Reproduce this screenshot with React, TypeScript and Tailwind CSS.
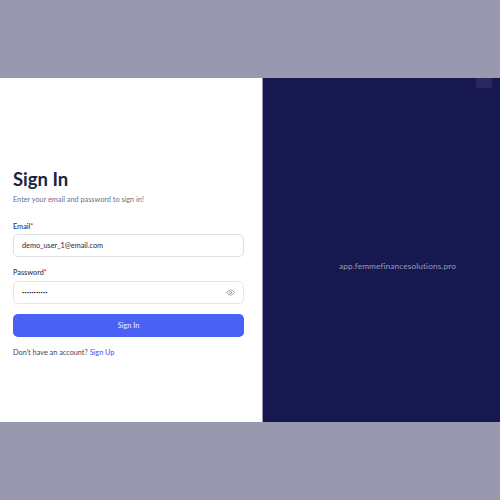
import { Eye } from "lucide-react";

export default function App() {
  return (
    <div className="h-[500px] w-[500px] bg-[#9898ae] flex flex-col justify-center font-['Lato',sans-serif] overflow-hidden">
      <div className="h-[344px] flex bg-white">
        <div className="w-[263px] shrink-0 border-r border-[#9898ae] pl-[13px] pr-[18px] pt-[90px]">
          <h1 className="text-[18.5px] leading-[22px] font-bold text-[#1b2540]">Sign In</h1>
          <p className="mt-[4px] text-[7.3px] leading-[12px] text-[#68708a]">Enter your email and password to sign in!</p>

          <form className="mt-[15px]">
            <label className="block text-[7.3px] leading-[12px] font-medium text-[#2a3350]">
              Email<span className="text-[#e5283d]">*</span>
            </label>
            <input
              type="text"
              readOnly
              value="demo_user_1@email.com"
              className="block mt-[1px] w-full h-[23px] px-[8px] border border-[#dcdfe8] rounded-[5px] text-[7.3px] text-[#1f2940] outline-none"
            />

            <label className="block mt-[10px] text-[7.3px] leading-[12px] font-medium text-[#2a3350]">
              Password<span className="text-[#e5283d]">*</span>
            </label>
            <div className="mt-[2px] relative">
              <input
                type="password"
                readOnly
                value="password123"
                className="block w-full h-[23px] px-[8px] border border-[#e4e6ed] rounded-[5px] text-[4px] text-[#1f2940] outline-none"
              />
              <Eye className="absolute right-[9px] top-[7px] w-[9px] h-[9px] text-[#868c9e]" />
            </div>

            <button
              type="button"
              className="block mt-[10px] w-full h-[23px] pt-[1px] rounded-[5px] bg-[#4a61f5] text-[#e6e9fe] text-[7.3px] font-medium"
            >
              Sign In
            </button>
          </form>

          <p className="mt-[10px] text-[7.3px] leading-[12px] text-[#3d4560]">
            Don't have an account? <span className="font-medium text-[#4a61f5]">Sign Up</span>
          </p>
        </div>

        <div className="relative flex-1 bg-[#17184f] flex items-center justify-center pt-[33px] pl-[32px]">
          <div className="absolute top-0 right-[8px] w-[16px] h-[10px] bg-[#29295d]" />
          <span className="text-[8.3px] tracking-[0.1px] text-[#9a9cba]">app.femmefinancesolutions.pro</span>
        </div>
      </div>
    </div>
  );
}
